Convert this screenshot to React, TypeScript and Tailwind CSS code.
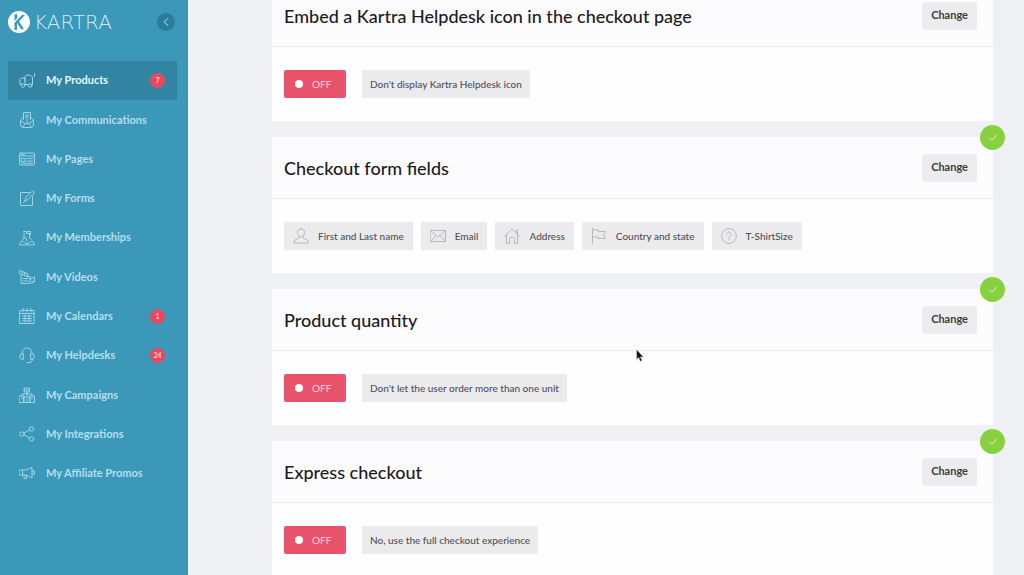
import type { ReactNode } from 'react';
import { Check, ChevronLeft } from 'lucide-react';

type IconName =
    | 'cart' | 'communications' | 'pages' | 'forms' | 'memberships' | 'videos' | 'calendar'
    | 'headset' | 'campaigns' | 'share' | 'megaphone'
    | 'user' | 'mail' | 'home' | 'flag' | 'help';

interface NavItem {
    id: string;
    label: string;
    icon: IconName;
    badge?: string;
}

interface Field {
    label: string;
    icon: IconName;
}

const NAV_ITEMS: NavItem[] = [
    { id: 'products', label: 'My Products', icon: 'cart', badge: '7' },
    { id: 'communications', label: 'My Communications', icon: 'communications' },
    { id: 'pages', label: 'My Pages', icon: 'pages' },
    { id: 'forms', label: 'My Forms', icon: 'forms' },
    { id: 'memberships', label: 'My Memberships', icon: 'memberships' },
    { id: 'videos', label: 'My Videos', icon: 'videos' },
    { id: 'calendars', label: 'My Calendars', icon: 'calendar', badge: '1' },
    { id: 'helpdesks', label: 'My Helpdesks', icon: 'headset', badge: '24' },
    { id: 'campaigns', label: 'My Campaigns', icon: 'campaigns' },
    { id: 'integrations', label: 'My Integrations', icon: 'share' },
    { id: 'affiliate', label: 'My Affiliate Promos', icon: 'megaphone' },
];

const FIELDS: Field[] = [
    { label: 'First and Last name', icon: 'user' },
    { label: 'Email', icon: 'mail' },
    { label: 'Address', icon: 'home' },
    { label: 'Country and state', icon: 'flag' },
    { label: 'T-ShirtSize', icon: 'help' },
];

// All icons are drawn on a 16x16 grid
const ICONS: Record<IconName, ReactNode> = {
    cart: (
        <>
            <path d="M15.500.5v3M13.500 4v7.500h-1M9.500 11.500h-3M1.500 11.500H1V6.500L2.500 5H6v6.500M6 8V4.500C6 2.500 7.500 2 9.500 2s3.500 1 4 3v3.500" />
            <circle cx="4" cy="12.500" r="1.800" />
            <circle cx="11.200" cy="12.500" r="1.800" />
        </>
    ),
    communications: (
        <>
            <path d="M4.500 7.500v-7h7v7M6.500 3h3M6.500 5h3" />
            <path d="M4.500 5L1.500 8v5l2 2.500h9l2-2.500V8l-3-3M1.500 8.500l4.500 3h4l4.500-3M3.500 15l3-3.500M12.500 15l-3-3.500M8 7v4" />
        </>
    ),
    pages: (
        <>
            <rect x="0.5" y="2" width="15" height="12" rx="1" />
            <path d="M.5 5h15M2.500 7.500h4v3h-4zM8.500 7.500h5M8.500 10h5M2.500 12.200h11M2.500 3.500h3" />
        </>
    ),
    forms: (
        <>
            <path d="M13.500 6.500v9H1.500v-13h9" />
            <path d="M6 10.500L7 7l6.500-6 2 1.500L9 9.500zM4.500 12.500L7 10" />
        </>
    ),
    memberships: (
        <>
            <path d="M4.500 1.500h3v2h3.500M5 3v5l-2 2.500M10.500 3.500v4.500l2 2M5 8h2l1 3M8.500 1.500h3v3" />
            <path d="M.5 14.500c0-2 1.200-3 3-3s2.500 1 3 2h3c.5-1.300 1.300-2 3-2s3 1 3 3z" />
        </>
    ),
    videos: (
        <>
            <path d="M1 1.500l8 3.500-1 2.500L.5 4.500zM3.500 2.500L3 5M6 3.500L5.500 6.500" />
            <path d="M2 6.500v8h9v-7H8M4 9.500h5M4 12h5M11 10l4.500-2v5L13 12.500v2" />
        </>
    ),
    calendar: (
        <>
            <path d="M1 2.500h14v13H1zM1 5.500h14M4 .5v3.500M8 .5v3.500M12 .5v3.500" />
            <path d="M3.500 8h9M3.500 10.500h9M3.500 13h9M6 7v7M10 7v7" />
        </>
    ),
    headset: (
        <>
            <path d="M3 7V6a5 5 0 0 1 10 0v1" />
            <path d="M4 6.500L1 8v3.500l3 1zM12 6.500L15 8v3.500l-3 1z" />
            <path d="M13.500 12.500v1L11 15.500H8" />
        </>
    ),
    campaigns: (
        <>
            <path d="M5.500 1h5v4h-5zM5.500 3h5M8 5v3.500M3 9V7h10v2" />
            <path d="M.5 9h4.500v6.500H.5zM5 10h6v5.500H5zM11 9h4.500v6.500H11zM2.500 11.500h1M12.500 11.500h1M8 12v3.500" />
        </>
    ),
    share: (
        <>
            <circle cx="3" cy="8" r="2.200" />
            <circle cx="12.500" cy="3" r="2.200" />
            <circle cx="12.500" cy="13" r="2.200" />
            <path d="M5 7l5.600-3M5 9l5.600 3" />
        </>
    ),
    megaphone: (
        <>
            <path d="M.5 5h3v5h-3zM3.500 5H7l6-2.500v10.500L7 10H3.500M5 10v3.500h2.500V10M13 6h2.500v3H13" />
        </>
    ),
    user: (
        <>
            <path d="M8 1c2.500 0 3.500 1.500 3.500 3.500S10 9 8 9 4.500 6.500 4.500 4.500 5.500 1 8 1z" />
            <path d="M6 8.500v1.500L1 12.500v2.500h14v-2.500L10 10V8.500" />
        </>
    ),
    mail: <path d="M.5 2.500h15v11H.5zM.5 2.500L8 9l7.500-6.500M.5 13.500L5.500 8M15.500 13.500L10.500 8" />,
    home: <path d="M.5 8.500L8 1l7.500 7.500M2.500 7v8.500h3v-4a2.500 2.500 0 0 1 5 0v4h3V7M12 4.500V2h1.500v4" />,
    flag: <path d="M1.500.5v15M1.500 2h6v1.500h7l-2 3.500 2 3.500H7.500V9h-6" />,
    help: (
        <>
            <circle cx="8" cy="8" r="7.400" />
            <path d="M5.800 6.300c0-1.400 1-2.200 2.200-2.200s2.200.8 2.200 2c0 1.700-2.200 1.700-2.200 3.400M8 11v1" />
        </>
    ),
};

function Icon({ name, className }: { name: IconName; className: string }) {
    return (
        <svg
            viewBox="0 0 16 16"
            fill="none"
            stroke="currentColor"
            strokeWidth="1"
            strokeLinecap="round"
            strokeLinejoin="round"
            aria-hidden="true"
            className={className}
        >
            {ICONS[name]}
        </svg>
    );
}

function Sidebar({ activeId }: { activeId: string }) {
    return (
        <aside className="w-[188px] shrink-0 bg-[#3b98b9] px-2">
            {/* Logo */}
            <div className="flex h-11 items-center">
                <svg viewBox="0 0 22 22" className="size-[22px]" aria-hidden="true">
                    <circle cx="11" cy="11" r="11" fill="#fafeff" />
                    <path d="M6.500 3.500l2.500-.5v6l5-5h3L11 10.200l5 8h-2.800L9 12v7H6.500z" fill="#3b98b9" />
                    <path d="M5 11l4-3.500V9l-2.500 3z" fill="#fafeff" />
                </svg>
                <span className="ml-1 font-['DejaVu_Sans'] text-[20px] leading-5 font-extralight text-[#cdedf8]">
                    KARTRA
                </span>
                <button
                    aria-label="Collapse menu"
                    className="mr-[5px] ml-auto flex size-[18px] items-center justify-center rounded-full bg-[#2b7b9b] text-[#7fb9cf]"
                >
                    <ChevronLeft size={14} strokeWidth={2} />
                </button>
            </div>

            {/* Nav Items */}
            <nav className="mt-[17px] flex h-[432px] flex-col">
                {NAV_ITEMS.map((item) => {
                    const isActive = item.id === activeId;
                    return (
                        <a
                            key={item.id}
                            href={`#${item.id}`}
                            aria-current={isActive ? 'page' : undefined}
                            className={`mr-[3px] flex flex-1 items-center pr-3 pl-[11px] text-[11px] font-bold ${
                                isActive ? 'bg-[#3284a3] text-[#e6f8fd]' : 'text-[#b4dfee]'
                            }`}
                        >
                            <Icon name={item.icon} className="size-4 text-[#9fd3e6]" />
                            <span className="ml-[11px]">{item.label}</span>
                            {item.badge && (
                                <span className="ml-auto flex size-[15px] items-center justify-center rounded-full bg-[#e8485f] text-[7px] font-bold text-[#ffc4cb]">
                                    {item.badge}
                                </span>
                            )}
                        </a>
                    );
                })}
            </nav>
        </aside>
    );
}

interface CardProps {
    title: string;
    done?: boolean;
    children: ReactNode;
}

function Card({ title, done = true, children }: CardProps) {
    return (
        <section className="relative bg-[#fefdff]">
            {done && (
                <span className="absolute -top-3 -right-3 flex size-[25px] items-center justify-center rounded-full bg-[#86d13d] text-white">
                    <Check size={10} strokeWidth={2} />
                </span>
            )}
            <header className="flex h-[62px] items-center justify-between border-b border-[#ebebee] bg-[#fcfbfd] pr-4 pl-3">
                <h2 className="text-[18px] leading-6 font-medium text-[#1b1b1d]">{title}</h2>
                <button className="h-7 rounded-xs bg-[#ececee] px-[9px] text-[11px] font-bold text-[#3b3b3e]">Change</button>
            </header>
            <div className="flex h-[74px] items-center px-3">{children}</div>
        </section>
    );
}

function ToggleRow({ text }: { text: string }) {
    return (
        <div className="flex items-center gap-4">
            <button
                role="switch"
                aria-checked="false"
                aria-label={text}
                className="flex h-7 w-[62px] items-center rounded-xs bg-[#e8536b] pl-[11px] text-[10px] text-[#ffd5da]"
            >
                <span className="mr-[9px] size-2 rounded-full bg-white" />
                OFF
            </button>
            <span className="flex h-7 items-center bg-[#ebebed] px-2 text-[10px] font-medium text-[#505054]">{text}</span>
        </div>
    );
}

export default function App() {
    return (
        <div className="flex h-screen overflow-hidden bg-[#eef0f3] font-['Lato',sans-serif]">
            <Sidebar activeId="products" />

            <main className="min-w-0 flex-1 overflow-hidden pr-[31px] pl-[84px]">
                {/* List is scrolled a little past its first card's top edge */}
                <div className="-mt-[15px] flex flex-col gap-4">
                    <Card title="Embed a Kartra Helpdesk icon in the checkout page">
                        <ToggleRow text="Don't display Kartra Helpdesk icon" />
                    </Card>
                    <Card title="Checkout form fields">
                        <ul className="flex gap-2">
                            {FIELDS.map((field) => (
                                <li
                                    key={field.label}
                                    className="flex h-7 items-center gap-[9px] bg-[#ebebed] px-[9px] text-[10px] font-medium text-[#505054]"
                                >
                                    <Icon name={field.icon} className="size-4 text-[#b9b9bd]" />
                                    {field.label}
                                </li>
                            ))}
                        </ul>
                    </Card>
                    <Card title="Product quantity">
                        <ToggleRow text="Don't let the user order more than one unit" />
                    </Card>
                    <Card title="Express checkout">
                        <ToggleRow text="No, use the full checkout experience" />
                    </Card>
                </div>
            </main>

            {/* Mouse pointer */}
            <svg viewBox="0 0 8 13" className="absolute top-[349px] left-[636px] h-[13px] w-2" aria-hidden="true">
                <path d="M.5.5v10l2.200-2 1.600 3.900 1.800-.8-1.600-3.700h3z" fill="#151517" stroke="#fff" strokeWidth="0.4" />
            </svg>
        </div>
    );
}
